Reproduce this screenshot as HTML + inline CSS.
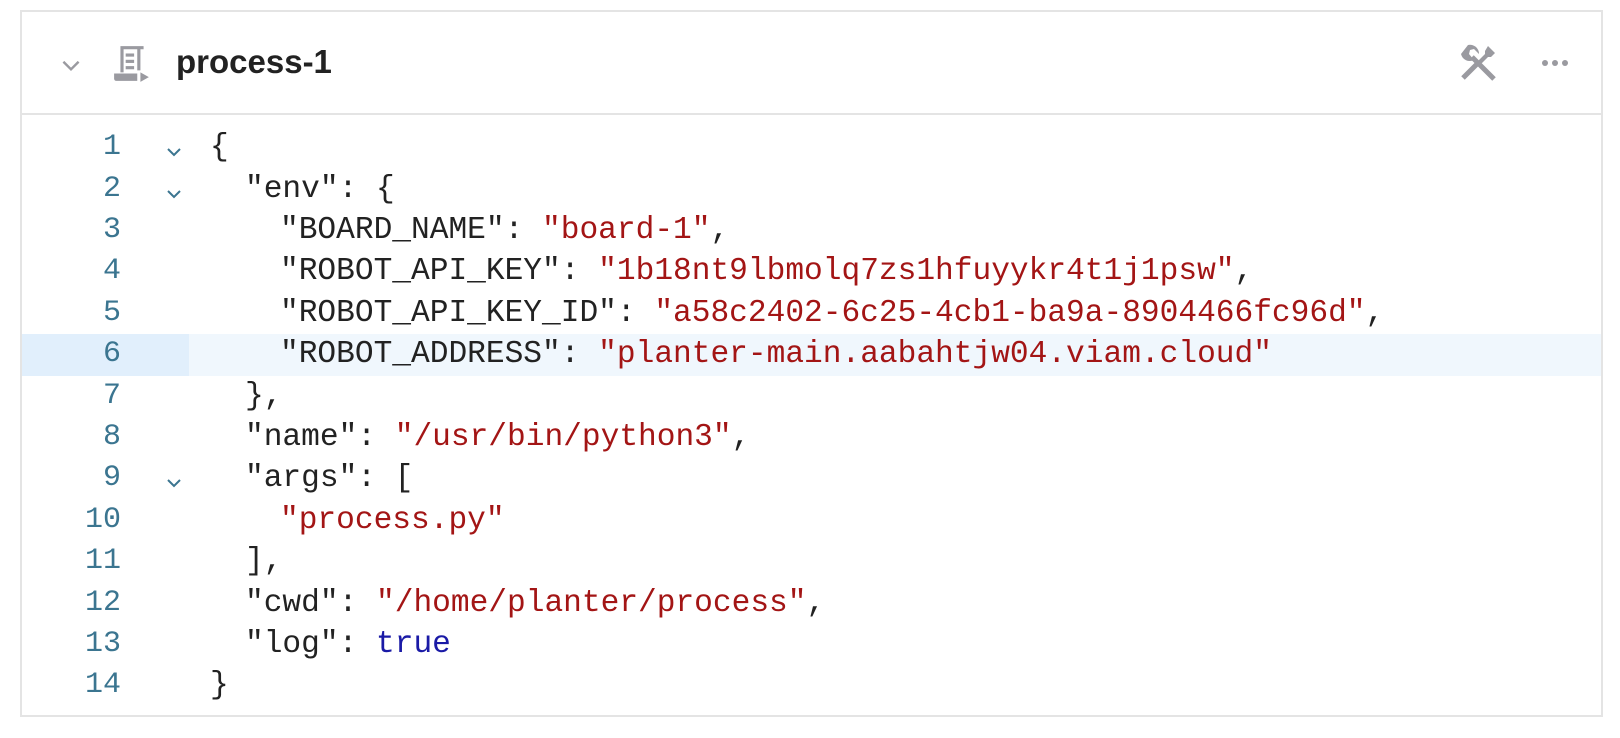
<!DOCTYPE html>
<html><head><meta charset="utf-8"><style>
body{margin:0;background:#fff;width:1620px;height:738px;position:relative;overflow:hidden}
.card{position:absolute;left:20px;top:10px;width:1583px;height:707px;border:2px solid #e4e4e4;box-sizing:border-box}
.hdr{position:absolute;left:0;top:0;right:0;height:101px;border-bottom:2px solid #e4e4e4}
.title{position:absolute;left:154px;top:31px;font:bold 33px "Liberation Sans",sans-serif;color:#222}
.line{position:absolute;left:0;right:0;height:41.4px;font:31.2px/41.4px "Liberation Mono",monospace;color:#222;white-space:pre}
.ln{position:absolute;right:1480px;width:80px;text-align:right;color:#3b7590;font-size:30px}
.code{position:absolute;left:188px}
.i{display:inline-block;width:35px}
.s{color:#a31515}.b{color:#1a1aa6}
.f{position:absolute;left:144px;top:0}
.hl{background:#f0f7fd}
.hl .g{position:absolute;left:0;top:0;width:167px;height:100%;background:#e1effc}
</style></head><body>
<div class="card">
<div class="hdr">
<svg style="position:absolute;left:36px;top:40px" width="26" height="26" viewBox="0 0 24 24"><path d="M5 9l7 7 7-7" fill="none" stroke="#9a9aa0" stroke-width="2.2"/></svg>
<svg style="position:absolute;left:90px;top:32px" width="40" height="40" viewBox="0 0 38 38" fill="#9a9aa0"><path d="M8 2h22v3h-3v20h-3V5H11v22H8z"/><rect x="13" y="9" width="8" height="3"/><rect x="13" y="15" width="8" height="3"/><rect x="13" y="21" width="8" height="3"/><path d="M2 28h22v7H4a2 2 0 0 1-2-2z"/><path d="M27 27l8 4.5-8 4.5z"/></svg>
<div class="title">process-1</div>
<svg style="position:absolute;left:1436px;top:31px" width="40" height="40" viewBox="0 0 40 40">
<g stroke="#9a9aa0" fill="none" stroke-linecap="butt">
<path d="M14 14L36 36" stroke-width="5"/>
<path d="M21 19L5 35" stroke-width="5"/>
</g>
<g fill="#9a9aa0">
<path d="M3 11a9 9 0 0 0 13 6l-5-6 1-4 4-1 5 5a9 9 0 0 0-11-9z"/>
<path d="M30 3l7 7-4 4h-3l-7 7-3-3 7-7v-3z"/>
</g>
</svg>
<svg style="position:absolute;left:1518px;top:46px" width="30" height="10" viewBox="0 0 30 10" fill="#9a9aa0"><circle cx="5" cy="5" r="3"/><circle cx="15" cy="5" r="3"/><circle cx="25" cy="5" r="3"/></svg>
</div>
<div style="position:absolute;left:0;right:0;top:115.3px">
<div class="line" style="top:0"><span class="ln">1</span><span class="f"><svg width="16" height="41" viewBox="0 0 16 41"><path d="M2 22l6 6 6-6" fill="none" stroke="#3b7590" stroke-width="2"/></svg></span><span class="code">{</span></div>
<div class="line" style="top:41.4px"><span class="ln">2</span><span class="f"><svg width="16" height="41" viewBox="0 0 16 41"><path d="M2 22l6 6 6-6" fill="none" stroke="#3b7590" stroke-width="2"/></svg></span><span class="code"><span class="i"></span>"env": {</span></div>
<div class="line" style="top:82.8px"><span class="ln">3</span><span class="code"><span class="i"></span><span class="i"></span>"BOARD_NAME": <span class="s">"board-1"</span>,</span></div>
<div class="line" style="top:124.2px"><span class="ln">4</span><span class="code"><span class="i"></span><span class="i"></span>"ROBOT_API_KEY": <span class="s">"1b18nt9lbmolq7zs1hfuyykr4t1j1psw"</span>,</span></div>
<div class="line" style="top:165.6px"><span class="ln">5</span><span class="code"><span class="i"></span><span class="i"></span>"ROBOT_API_KEY_ID": <span class="s">"a58c2402-6c25-4cb1-ba9a-8904466fc96d"</span>,</span></div>
<div class="line hl" style="top:207px"><span class="g"></span><span class="ln">6</span><span class="code"><span class="i"></span><span class="i"></span>"ROBOT_ADDRESS": <span class="s">"planter-main.aabahtjw04.viam.cloud"</span></span></div>
<div class="line" style="top:248.4px"><span class="ln">7</span><span class="code"><span class="i"></span>},</span></div>
<div class="line" style="top:289.8px"><span class="ln">8</span><span class="code"><span class="i"></span>"name": <span class="s">"/usr/bin/python3"</span>,</span></div>
<div class="line" style="top:331.2px"><span class="ln">9</span><span class="f"><svg width="16" height="41" viewBox="0 0 16 41"><path d="M2 22l6 6 6-6" fill="none" stroke="#3b7590" stroke-width="2"/></svg></span><span class="code"><span class="i"></span>"args": [</span></div>
<div class="line" style="top:372.6px"><span class="ln">10</span><span class="code"><span class="i"></span><span class="i"></span><span class="s">"process.py"</span></span></div>
<div class="line" style="top:414px"><span class="ln">11</span><span class="code"><span class="i"></span>],</span></div>
<div class="line" style="top:455.4px"><span class="ln">12</span><span class="code"><span class="i"></span>"cwd": <span class="s">"/home/planter/process"</span>,</span></div>
<div class="line" style="top:496.8px"><span class="ln">13</span><span class="code"><span class="i"></span>"log": <span class="b">true</span></span></div>
<div class="line" style="top:538.2px"><span class="ln">14</span><span class="code">}</span></div>
</div>
</div>
</body></html>
